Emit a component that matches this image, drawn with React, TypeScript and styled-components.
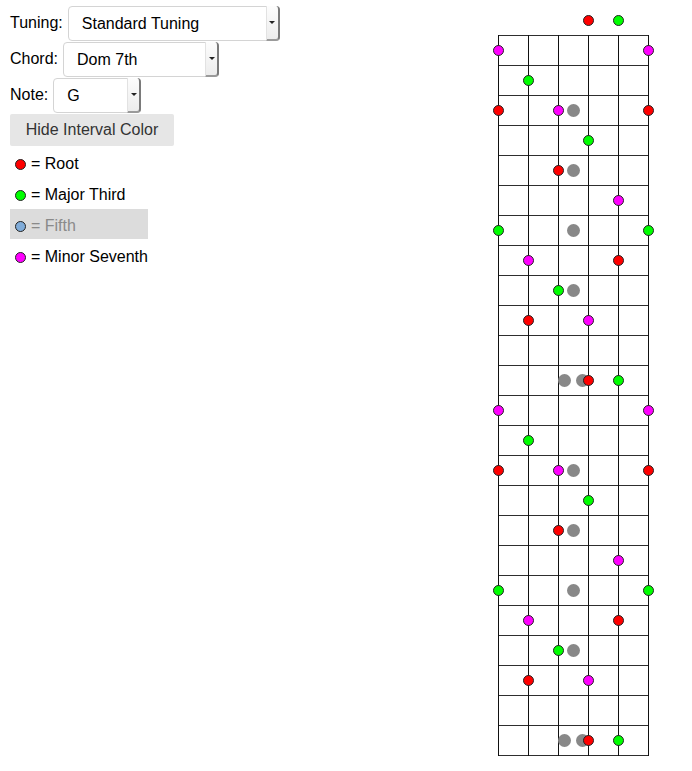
import React from "react";
import styled, { createGlobalStyle } from "styled-components";

const GlobalStyle = createGlobalStyle`
  body {
    margin: 0;
    background: #fff;
    font-family: "Liberation Sans", Arial, Helvetica, sans-serif;
    font-size: 16px;
    color: #000;
  }
`;

const Page = styled.div`
  display: grid;
  grid-template-columns: 480px 170px;
  padding: 0 10px;
  height: 771px;
`;

const Controls = styled.div`
  display: flex;
  flex-direction: column;
  padding-top: 5px;
`;

const Row = styled.div`
  display: flex;
  align-items: center;
  gap: 5px;
  height: 36px;
`;

const Label = styled.label`
  font-size: 16px;
`;

const SelectWrap = styled.div<{ width: number }>`
  position: relative;
  width: ${(p) => p.width}px;
  height: 35px;
`;

const Select = styled.select`
  appearance: none;
  -webkit-appearance: none;
  width: 100%;
  height: 100%;
  box-sizing: border-box;
  border: 1px solid #d4d4d4;
  border-radius: 4px;
  background: #fff;
  padding: 0 0 0 13px;
  font-family: "Liberation Sans", Arial, Helvetica, sans-serif;
  font-size: 16px;
  color: #000;
  outline: none;
`;

const Arrow = styled.span`
  position: absolute;
  top: 0;
  right: 0;
  bottom: 0;
  width: 14px;
  box-sizing: border-box;
  pointer-events: none;
  display: flex;
  align-items: center;
  justify-content: center;
  background: linear-gradient(#fdfdfd, #ececec);
  border-left: 1px solid #e2e2e2;
  border-right: 2px solid #7a7a7a;
  border-bottom: 2px solid #9a9a9a;
  border-radius: 0 4px 4px 0;

  &::after {
    content: "";
    border-left: 3px solid transparent;
    border-right: 3px solid transparent;
    border-top: 3px solid #222;
  }
`;

const ToggleButton = styled.button`
  align-self: flex-start;
  width: 164px;
  height: 32px;
  margin-top: 1px;
  border: none;
  border-radius: 2px;
  background: #e6e6e6;
  color: #333;
  font-family: "Liberation Sans", Arial, Helvetica, sans-serif;
  font-size: 16px;
  padding: 0;
  cursor: pointer;
`;

const Legend = styled.ul`
  list-style: none;
  margin: 1px 0 0;
  padding: 0;
  display: flex;
  flex-direction: column;
  gap: 1px;
`;

const LegendItem = styled.li<{ muted?: boolean }>`
  display: flex;
  align-items: center;
  gap: 5px;
  box-sizing: border-box;
  height: 30px;
  padding: 4px 0 0 5px;
  width: 138px;
  background: ${(p) => (p.muted ? "#dcdcdc" : "transparent")};
  color: ${(p) => (p.muted ? "#8a8a8a" : "#000")};
`;

const Swatch = styled.span<{ color: string }>`
  width: 11px;
  height: 11px;
  box-sizing: border-box;
  border-radius: 50%;
  border: 1px solid #222;
  background: ${(p) => p.color};
`;

const Board = styled.svg`
  display: block;
`;

const RED = "#ff0000";
const GREEN = "#00ff00";
const MAG = "#ff00ff";
const GREY = "#888888";

// string x positions inside the svg, fret line y positions
const STRINGS = [8, 38, 68, 98, 128, 158];
const FRET_COUNT = 24;
const TOP = 35;
const STEP = 30;

type Dot = [number, number, string];

// [string x (page), row index (0 = open), colour]
const half: Dot[] = [
  [588, 0, RED],
  [618, 0, GREEN],
  [498, 1, MAG],
  [648, 1, MAG],
  [528, 2, GREEN],
  [498, 3, RED],
  [573, 3, GREY],
  [558, 3, MAG],
  [648, 3, RED],
  [588, 4, GREEN],
  [573, 5, GREY],
  [558, 5, RED],
  [618, 6, MAG],
  [498, 7, GREEN],
  [573, 7, GREY],
  [648, 7, GREEN],
  [528, 8, MAG],
  [618, 8, RED],
  [573, 9, GREY],
  [558, 9, GREEN],
  [528, 10, RED],
  [588, 10, MAG],
];

const octave: Dot[] = [
  [564, 12, GREY],
  [582, 12, GREY],
  [588, 12, RED],
  [618, 12, GREEN],
];

const dots: Dot[] = [
  ...half,
  ...octave,
  ...half.filter((d) => d[1] > 0).map((d) => [d[0], d[1] + 12, d[2]] as Dot),
  ...octave.map((d) => [d[0], d[1] + 12, d[2]] as Dot),
];

const rowY = (row: number) => (row === 0 ? 20 : TOP + (row - 1) * STEP + 15);

const Fretboard = () => {
  const bottom = TOP + FRET_COUNT * STEP;
  return (
    <Board width={170} height={771} viewBox="0 0 170 771">
      {Array.from({ length: FRET_COUNT + 1 }, (_, i) => (
        <line
          key={`f${i}`}
          x1={STRINGS[0]}
          x2={STRINGS[5] + 1}
          y1={TOP + i * STEP + 0.5}
          y2={TOP + i * STEP + 0.5}
          stroke="#2e2e2e"
          strokeWidth={1}
        />
      ))}
      {STRINGS.map((x) => (
        <line
          key={`s${x}`}
          x1={x + 0.5}
          x2={x + 0.5}
          y1={TOP}
          y2={bottom + 1}
          stroke="#111"
          strokeWidth={1}
        />
      ))}
      {dots.map(([px, row, color], i) =>
        color === GREY ? (
          <circle key={i} cx={px - 490 + 0.5} cy={rowY(row) + 0.5} r={6.5} fill={GREY} />
        ) : (
          <circle
            key={i}
            cx={px - 490 + 0.5}
            cy={rowY(row) + 0.5}
            r={5}
            fill={color}
            stroke="#222"
            strokeWidth={1}
          />
        )
      )}
    </Board>
  );
};

const App = () => {
  return (
    <>
      <GlobalStyle />
      <Page>
        <Controls>
          <Row>
            <Label>Tuning:</Label>
            <SelectWrap width={212}>
              <Select defaultValue="standard">
                <option value="standard">Standard Tuning</option>
              </Select>
              <Arrow />
            </SelectWrap>
          </Row>
          <Row>
            <Label>Chord:</Label>
            <SelectWrap width={156}>
              <Select defaultValue="dom7">
                <option value="dom7">Dom 7th</option>
              </Select>
              <Arrow />
            </SelectWrap>
          </Row>
          <Row>
            <Label>Note:</Label>
            <SelectWrap width={88}>
              <Select defaultValue="G">
                <option value="G">G</option>
              </Select>
              <Arrow />
            </SelectWrap>
          </Row>
          <ToggleButton>Hide Interval Color</ToggleButton>
          <Legend>
            <LegendItem>
              <Swatch color={RED} />= Root
            </LegendItem>
            <LegendItem>
              <Swatch color={GREEN} />= Major Third
            </LegendItem>
            <LegendItem muted>
              <Swatch color="#80acd9" />= Fifth
            </LegendItem>
            <LegendItem>
              <Swatch color={MAG} />= Minor Seventh
            </LegendItem>
          </Legend>
        </Controls>
        <Fretboard />
      </Page>
    </>
  );
};

export default App;
